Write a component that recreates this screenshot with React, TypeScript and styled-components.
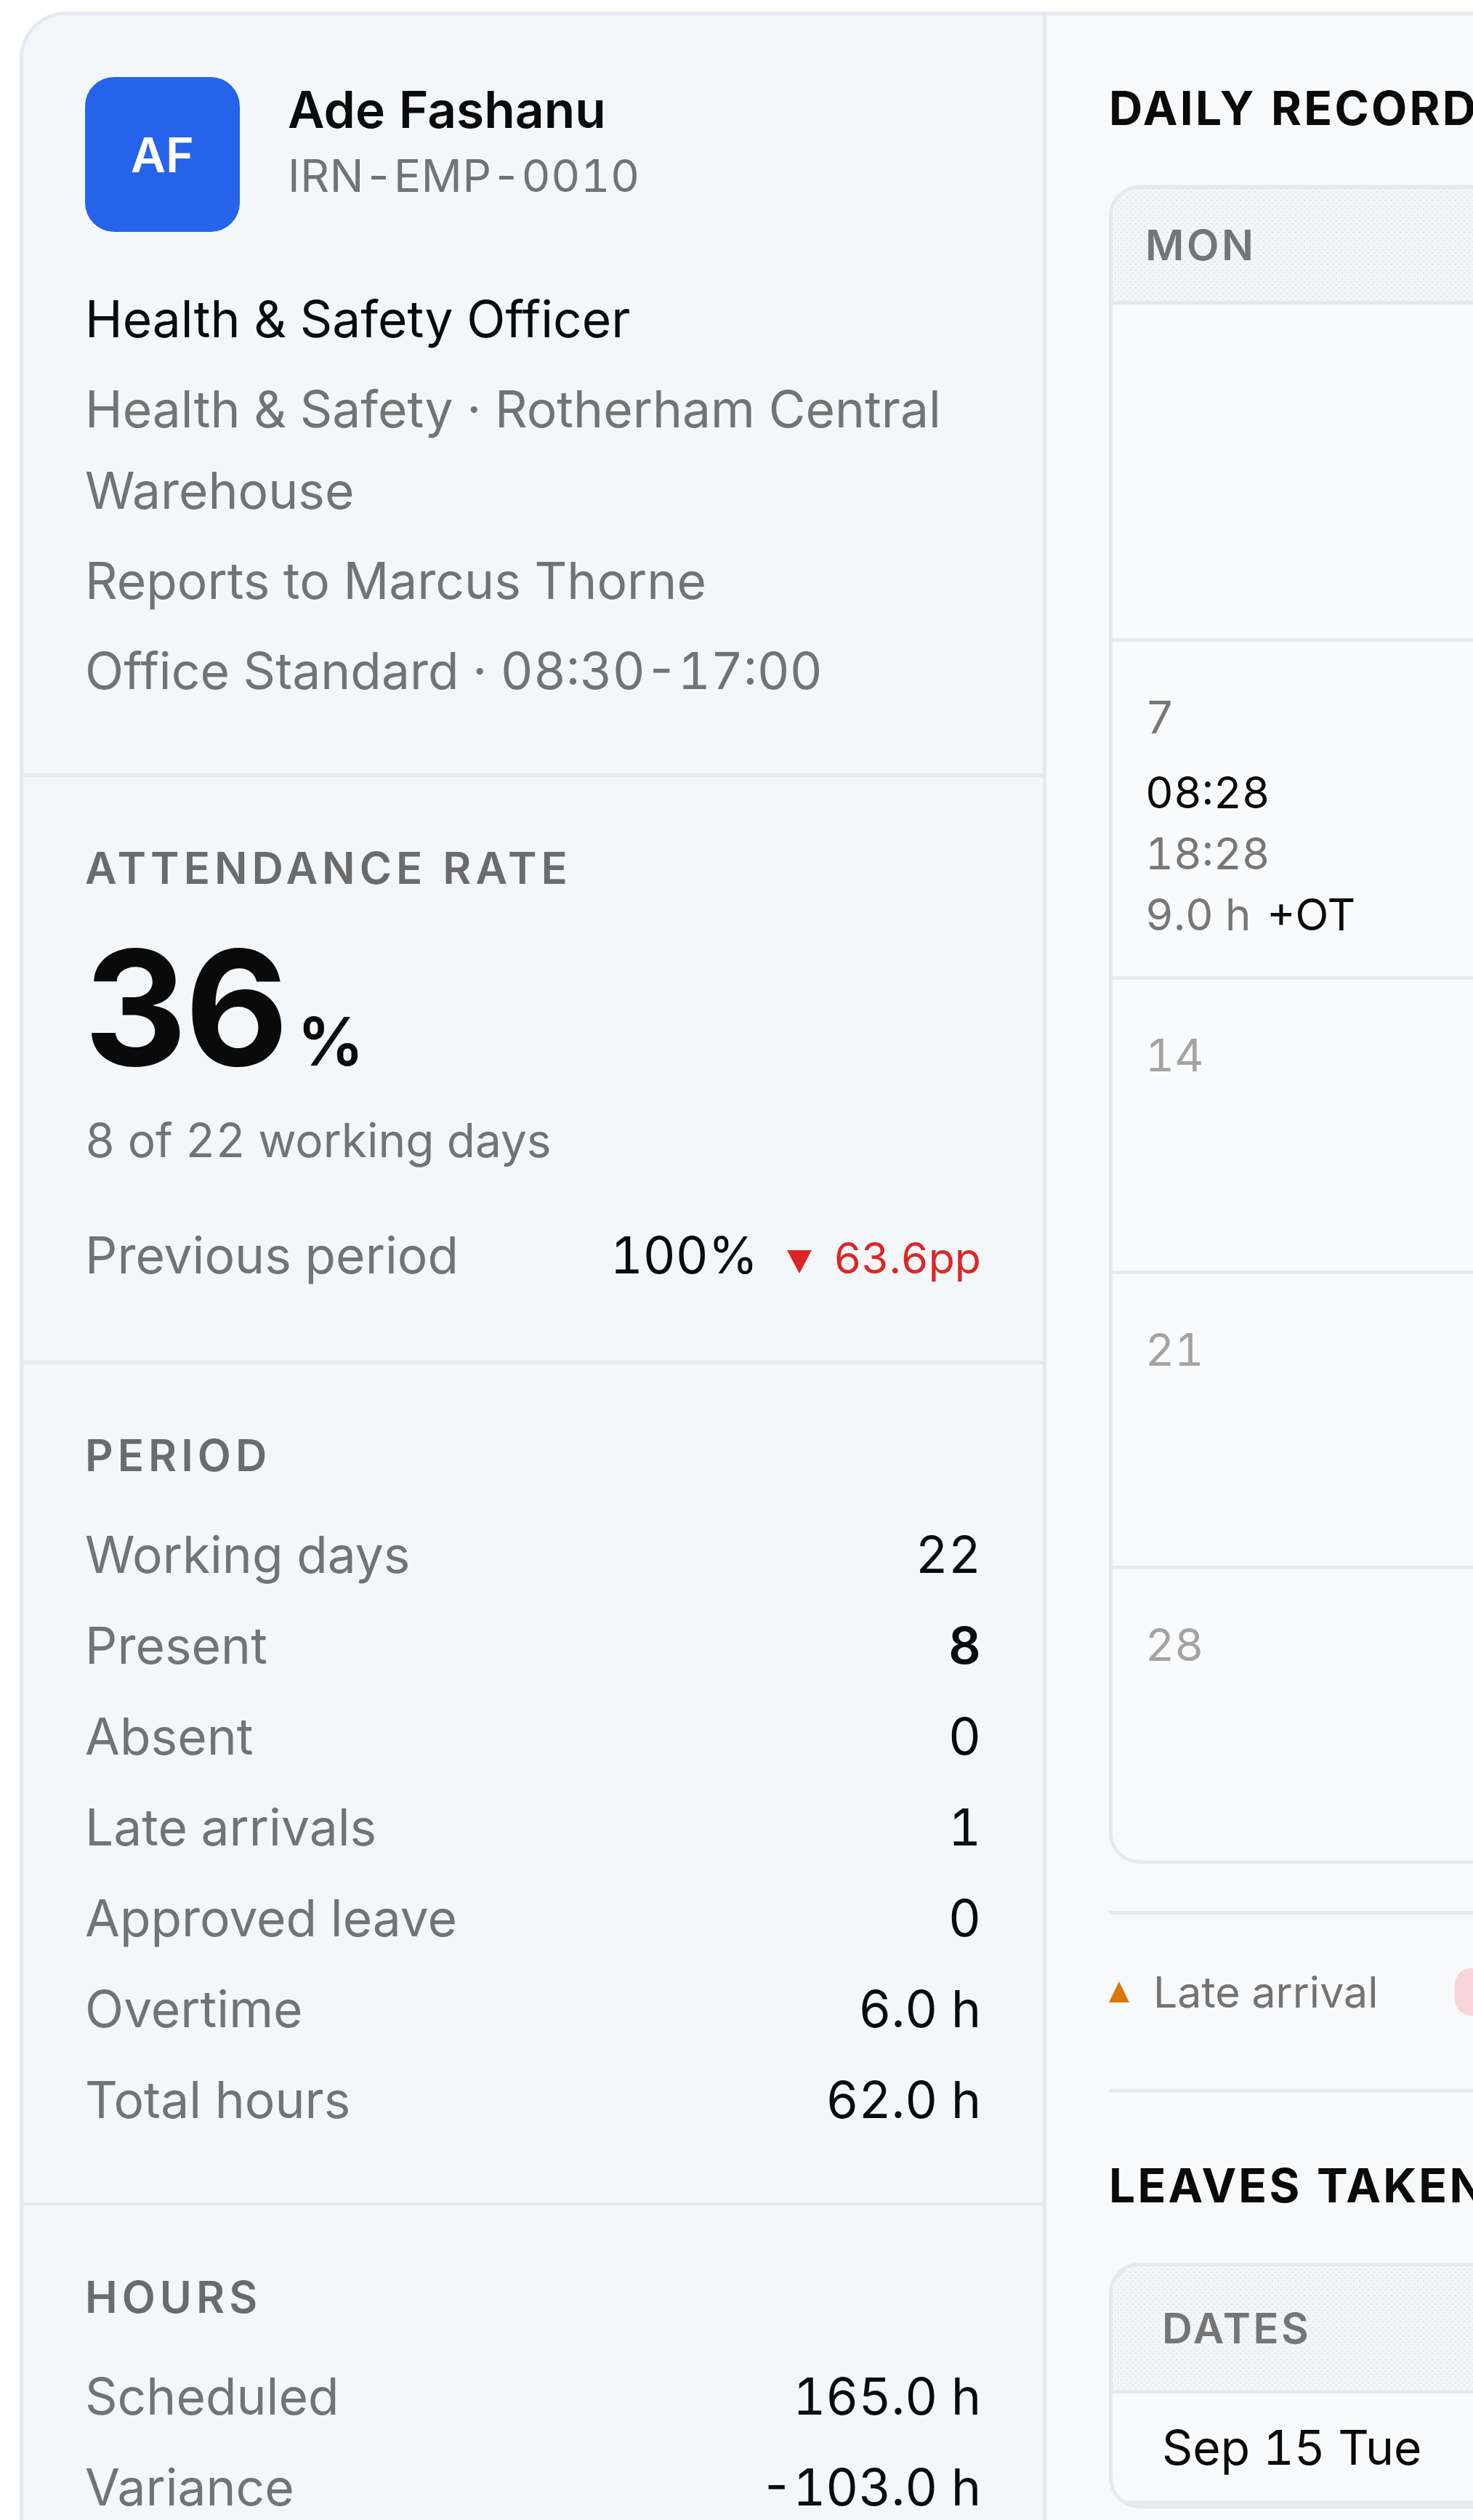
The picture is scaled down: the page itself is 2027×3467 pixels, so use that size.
import React from "react";
import styled, { createGlobalStyle } from "styled-components";

const GlobalStyle = createGlobalStyle`
  html, body { margin: 0; padding: 0; background: #ffffff; overflow: hidden; }
  body {
    font-family: Inter, "Noto Sans", "Liberation Sans", sans-serif;
    color: #0a0a0a;
    font-variant-numeric: tabular-nums;
  }
  * { box-sizing: border-box; }
`;

const BORDER = "#e6e9ee";

const Page = styled.div`
  padding: 16px 0 0 27px;
  width: max-content;
`;

const Card = styled.div`
  display: flex;
  align-items: stretch;
  border: 5px solid ${BORDER};
  border-radius: 64px;
  overflow: hidden;
  background: #f8f9fb;
`;

const Sidebar = styled.aside`
  width: 1408px;
  flex-shrink: 0;
  background: #f4f7fa;
  border-right: 5px solid ${BORDER};
`;

const Section = styled.section`
  padding: 85px;
  border-bottom: 5px solid ${BORDER};
`;

const Identity = styled.div`
  display: flex;
  align-items: flex-start;
  gap: 66px;
`;

const Avatar = styled.div`
  width: 213px;
  height: 213px;
  flex-shrink: 0;
  border-radius: 40px;
  background: #2563eb;
  color: #ffffff;
  display: flex;
  align-items: center;
  justify-content: center;
  font-size: 66px;
  font-weight: 600;
`;

const NameBlock = styled.div`
  display: flex;
  flex-direction: column;
`;

const Name = styled.div`
  font-size: 69.5px;
  line-height: 90px;
  font-weight: 600;
  color: #0a0a0a;
`;

const EmpId = styled.div`
  font-size: 62px;
  line-height: 92px;
  color: #737373;
  letter-spacing: 0.01em;
`;

const Details = styled.div`
  margin-top: 64px;
  display: flex;
  flex-direction: column;
  gap: 12px;
`;

const DetailLine = styled.div<{ $primary?: boolean }>`
  font-size: 69.5px;
  line-height: 112px;
  color: ${(p) => (p.$primary ? "#0a0a0a" : "#737373")};
`;

const SideTitle = styled.div`
  font-size: 60px;
  line-height: 80px;
  font-weight: 600;
  letter-spacing: 0.1em;
  color: #6b6b6b;
  text-transform: uppercase;
`;

const BigRate = styled.div`
  margin-top: 42px;
  display: flex;
  align-items: baseline;
`;

const BigNumber = styled.span`
  font-size: 220px;
  line-height: 220px;
  font-weight: 700;
  letter-spacing: -0.02em;
  color: #0a0a0a;
`;

const BigUnit = styled.span`
  margin-left: 16px;
  font-size: 92px;
  font-weight: 600;
  color: #0a0a0a;
`;

const SubText = styled.div`
  margin-top: 26px;
  font-size: 64px;
  line-height: 93px;
  color: #737373;
`;

const CompareRow = styled.div`
  margin-top: 56px;
  display: flex;
  align-items: baseline;
  justify-content: space-between;
  font-size: 69.5px;
  line-height: 112px;
`;

const Label = styled.span`
  color: #737373;
`;

const CompareValues = styled.span`
  display: flex;
  align-items: baseline;
`;

const PrevValue = styled.span`
  color: #0a0a0a;
  margin-right: 40px;
`;

const DeltaIcon = styled.svg`
  width: 34px;
  height: 34px;
  margin-right: 30px;
  margin-bottom: 4px;
`;

const Delta = styled.span`
  font-size: 59px;
  color: #dc2626;
`;

const StatList = styled.div`
  margin-top: 41px;
  display: flex;
  flex-direction: column;
  gap: 13px;
`;

const StatRow = styled.div`
  display: flex;
  justify-content: space-between;
  align-items: baseline;
  font-size: 69.5px;
  line-height: 112px;
`;

const StatValue = styled.span<{ $strong?: boolean }>`
  color: #0a0a0a;
  font-weight: ${(p) => (p.$strong ? 600 : 400)};
`;

/* ---------- right panel ---------- */

const Main = styled.main`
  flex-shrink: 0;
  padding: 88px 86px 200px;
  background: #f8f9fb;
`;

const MainTitle = styled.h2`
  margin: 0 0 66px;
  font-size: 64px;
  line-height: 80px;
  font-weight: 700;
  letter-spacing: 0.05em;
  color: #0a0a0a;
  text-transform: uppercase;
`;

const TableBox = styled.div`
  border: 5px solid ${BORDER};
  border-radius: 42px;
  overflow: hidden;
  background: #f9fafb;
  width: max-content;
`;

const dotted = `
  background-color: #f3f6f9;
  background-image:
    radial-gradient(#e1e7ee 0.9px, transparent 1.3px),
    radial-gradient(#e1e7ee 0.9px, transparent 1.3px);
  background-size: 8px 8px;
  background-position: 0 0, 4px 4px;
`;

const CalHead = styled.div`
  display: grid;
  grid-template-columns: repeat(7, 560px);
  ${dotted}
`;

const HeadCell = styled.div<{ $pad: number; $v: number }>`
  padding: ${(p) => p.$v}px ${(p) => p.$pad}px;
  font-size: 58px;
  line-height: 80px;
  font-weight: 600;
  letter-spacing: 0.06em;
  color: #757575;
  text-transform: uppercase;
`;

const WeekRow = styled.div<{ $h: number }>`
  display: grid;
  grid-template-columns: repeat(7, 560px);
  height: ${(p) => p.$h}px;
  border-top: 5px solid ${BORDER};
`;

const DayCell = styled.div<{ $first?: boolean }>`
  padding: 62px 45px 0;
  display: flex;
  flex-direction: column;
  border-left: ${(p) => (p.$first ? "none" : `5px solid ${BORDER}`)};
`;

const DayNum = styled.div<{ $muted?: boolean }>`
  font-size: 62px;
  line-height: 84px;
  margin-bottom: 19px;
  color: ${(p) => (p.$muted ? "#a3a3a3" : "#777777")};
`;

const TimeLine = styled.div<{ $dim?: boolean }>`
  font-size: 60px;
  line-height: 84px;
  color: ${(p) => (p.$dim ? "#777777" : "#0a0a0a")};
`;

const OtTag = styled.span`
  margin-left: 22px;
  color: #0a0a0a;
`;

const Legend = styled.div`
  margin-top: 65px;
  padding: 74px 0 101px;
  border-top: 5px solid ${BORDER};
  border-bottom: 5px solid ${BORDER};
  display: flex;
  align-items: center;
  gap: 106px;
  width: 3930px;
`;

const LegendItem = styled.div`
  display: flex;
  align-items: center;
  height: 65px;
  font-size: 59px;
  color: #737373;
`;

const LegendTri = styled.svg`
  width: 28px;
  height: 29px;
  margin-right: 33px;
`;

const Swatch = styled.span<{ $color: string }>`
  width: 70px;
  height: 65px;
  border-radius: 22px;
  background: ${(p) => p.$color};
  margin-right: 31px;
`;

const LeavesTitle = styled(MainTitle)`
  margin-top: 88px;
`;

const LeaveHead = styled.div`
  display: grid;
  grid-template-columns: 900px 900px 500px 700px;
  border-bottom: 5px solid ${BORDER};
  ${dotted}
`;

const LeaveRow = styled.div`
  display: grid;
  grid-template-columns: 900px 900px 500px 700px;
  border-bottom: 5px solid ${BORDER};
`;

const LeaveCell = styled.div`
  padding: 30px 68px;
  font-size: 66px;
  line-height: 88px;
  color: #0a0a0a;
`;

type Day = {
  n?: number;
  muted?: boolean;
  in?: string;
  out?: string;
  hrs?: string;
  ot?: boolean;
};

const weeks: { h: number; days: Day[] }[] = [
  {
    h: 464,
    days: [
      {},
      { n: 1, in: "08:31", out: "17:02", hrs: "8.5 h" },
      { n: 2, in: "08:25", out: "17:00", hrs: "8.6 h" },
      { n: 3, in: "08:44", out: "17:10", hrs: "8.4 h" },
      { n: 4, in: "08:29", out: "17:05", hrs: "8.6 h" },
      { n: 5, muted: true },
      { n: 6, muted: true },
    ],
  },
  {
    h: 465,
    days: [
      { n: 7, in: "08:28", out: "18:28", hrs: "9.0 h", ot: true },
      { n: 8, in: "08:27", out: "17:30", hrs: "8.5 h" },
      { n: 9, in: "08:30", out: "19:30", hrs: "10.5 h", ot: true },
      { n: 10, in: "08:26", out: "17:00", hrs: "8.1 h" },
      { n: 11, muted: true },
      { n: 12, muted: true },
      { n: 13, muted: true },
    ],
  },
  { h: 405, days: [14, 15, 16, 17, 18, 19, 20].map((n) => ({ n, muted: true })) },
  { h: 406, days: [21, 22, 23, 24, 25, 26, 27].map((n) => ({ n, muted: true })) },
  { h: 405, days: [...[28, 29, 30].map((n) => ({ n, muted: true })), {}, {}, {}, {}] },
];

const dayNames = ["Mon", "Tue", "Wed", "Thu", "Fri", "Sat", "Sun"];

const periodStats: [string, string, boolean?][] = [
  ["Working days", "22"],
  ["Present", "8", true],
  ["Absent", "0"],
  ["Late arrivals", "1"],
  ["Approved leave", "0"],
  ["Overtime", "6.0 h"],
  ["Total hours", "62.0 h"],
];

const hourStats: [string, string][] = [
  ["Scheduled", "165.0 h"],
  ["Variance", "-103.0 h"],
];

export default function App() {
  return (
    <>
      <GlobalStyle />
      <Page>
        <Card>
          <Sidebar>
            <Section>
              <Identity>
                <Avatar>AF</Avatar>
                <NameBlock>
                  <Name>Ade Fashanu</Name>
                  <EmpId>IRN-EMP-0010</EmpId>
                </NameBlock>
              </Identity>
              <Details>
                <DetailLine $primary>Health &amp; Safety Officer</DetailLine>
                <DetailLine>Health &amp; Safety · Rotherham Central Warehouse</DetailLine>
                <DetailLine>Reports to Marcus Thorne</DetailLine>
                <DetailLine>Office Standard · 08:30-17:00</DetailLine>
              </Details>
            </Section>

            <Section>
              <SideTitle>Attendance rate</SideTitle>
              <BigRate>
                <BigNumber>36</BigNumber>
                <BigUnit>%</BigUnit>
              </BigRate>
              <SubText>8 of 22 working days</SubText>
              <CompareRow>
                <Label>Previous period</Label>
                <CompareValues>
                  <PrevValue>100%</PrevValue>
                  <DeltaIcon viewBox="0 0 34 34">
                    <polygon points="0,2 34,2 17,34" fill="#dc2626" />
                  </DeltaIcon>
                  <Delta>63.6pp</Delta>
                </CompareValues>
              </CompareRow>
            </Section>

            <Section>
              <SideTitle>Period</SideTitle>
              <StatList>
                {periodStats.map(([l, v, s]) => (
                  <StatRow key={l}>
                    <Label>{l}</Label>
                    <StatValue $strong={s}>{v}</StatValue>
                  </StatRow>
                ))}
              </StatList>
            </Section>

            <Section>
              <SideTitle>Hours</SideTitle>
              <StatList>
                {hourStats.map(([l, v]) => (
                  <StatRow key={l}>
                    <Label>{l}</Label>
                    <StatValue>{v}</StatValue>
                  </StatRow>
                ))}
              </StatList>
            </Section>
          </Sidebar>

          <Main>
            <MainTitle>Daily records</MainTitle>
            <TableBox>
              <CalHead>
                {dayNames.map((d) => (
                  <HeadCell key={d} $pad={45} $v={37}>
                    {d}
                  </HeadCell>
                ))}
              </CalHead>
              {weeks.map((w, wi) => (
                <WeekRow key={wi} $h={w.h}>
                  {w.days.map((d, di) => (
                    <DayCell key={di} $first={di === 0}>
                      {d.n !== undefined && <DayNum $muted={d.muted}>{d.n}</DayNum>}
                      {d.in && <TimeLine>{d.in}</TimeLine>}
                      {d.out && <TimeLine $dim>{d.out}</TimeLine>}
                      {d.hrs && (
                        <TimeLine $dim>
                          {d.hrs}
                          {d.ot && <OtTag>+OT</OtTag>}
                        </TimeLine>
                      )}
                    </DayCell>
                  ))}
                </WeekRow>
              ))}
            </TableBox>

            <Legend>
              <LegendItem>
                <LegendTri viewBox="0 0 28 29">
                  <polygon points="14,0 28,29 0,29" fill="#d97706" />
                </LegendTri>
                Late arrival
              </LegendItem>
              <LegendItem>
                <Swatch $color="#f7d5d9" />
                Absent
              </LegendItem>
              <LegendItem>
                <Swatch $color="#dbe7fb" />
                On leave
              </LegendItem>
            </Legend>

            <LeavesTitle>Leaves taken</LeavesTitle>
            <TableBox>
              <LeaveHead>
                {["Dates", "Type", "Days", "Status"].map((h) => (
                  <HeadCell key={h} $pad={68} $v={45}>
                    {h}
                  </HeadCell>
                ))}
              </LeaveHead>
              <LeaveRow>
                <LeaveCell>Sep 15 Tue</LeaveCell>
                <LeaveCell>Annual leave</LeaveCell>
                <LeaveCell>1</LeaveCell>
                <LeaveCell>Approved</LeaveCell>
              </LeaveRow>
            </TableBox>
          </Main>
        </Card>
      </Page>
    </>
  );
}
